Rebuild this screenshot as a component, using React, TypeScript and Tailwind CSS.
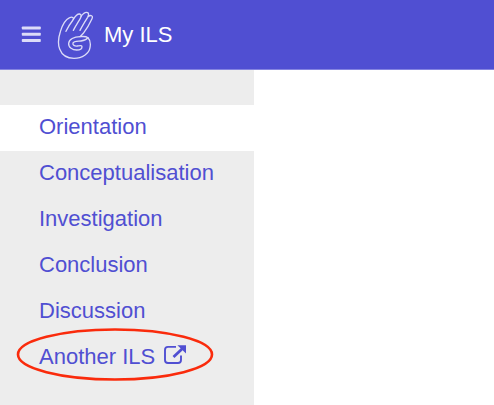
interface PhaseItem {
    label: string,
    active?: boolean,
    external?: boolean,
}

const phases: PhaseItem[] = [
    { label: "Orientation", active: true },
    { label: "Conceptualisation" },
    { label: "Investigation" },
    { label: "Conclusion" },
    { label: "Discussion" },
    { label: "Another ILS", external: true },
];

function MenuIcon() {
    return (
        <svg className="w-[20px] h-[18px]" viewBox="0 0 20 18" fill="#dcdcf8" aria-hidden="true">
            <rect x="0.8" y="0.5" width="19" height="3" rx="0.8" />
            <rect x="0.8" y="6.8" width="19" height="3" rx="0.8" />
            <rect x="0.8" y="13" width="19" height="3" rx="0.8" />
        </svg>
    );
}

function HandLogo() {
    return (
        <svg
            className="w-[38px] h-[50px]"
            viewBox="171 27 114 150"
            fill="none"
            stroke="#dcdcf8"
            strokeWidth="4"
            strokeLinecap="round"
            strokeLinejoin="round"
            aria-hidden="true"
        >
            <path d="M198 91 C204 77 212 66 219 57 C223 50 217 46 209 50 C196 56 187 72 181 92 C175 110 173 128 179 144 C185 160 200 172 222 172 C247 172 267 158 270 140 C272 129 271 117 264 110 C259 106 250 106 240 107 L250 97 C260 84 270 66 276 53 C280 44 272 41 265 46" />
            <path d="M220 55 C226 45 233 38 239 39 C246 41 244 47 241 52 C234 64 226 76 220 88" />
            <path d="M243 46 C249 38 257 32 263 35 C268 38 266 43 263 49 C254 63 246 76 240 88" />
            <path d="M240 107 C222 107 207 115 206 127 C205 140 218 147 230 147 C239 147 246 143 246 137 C246 132 239 134 232 135 C224 136 217 132 219 126 C221 120 232 121 243 120 C253 119 260 115 264 110" />
        </svg>
    );
}

function ExternalIcon() {
    return (
        <svg className="w-[24px] h-[22px]" viewBox="0 2 24 22" fill="none" aria-hidden="true">
            <path
                d="M13 3.9H5A3 3 0 0 0 2 6.9V17A3 3 0 0 0 5 20H15A3 3 0 0 0 18 17V12.5"
                stroke="#504fd2"
                strokeWidth="1.9"
            />
            <path d="M10.5 14L20 5" stroke="#504fd2" strokeWidth="2.8" />
            <path d="M14.4 2.2H23V10.6L14.4 2.2Z" fill="#504fd2" />
        </svg>
    );
}

function Highlight() {
    return (
        <svg
            className="absolute left-[16px] -top-[8px] w-[198px] h-[54px] pointer-events-none"
            viewBox="0 0 198 54"
            fill="none"
            aria-hidden="true"
        >
            <ellipse cx="99" cy="27.5" rx="97" ry="25" stroke="#fa2b0c" strokeWidth="2.6" />
        </svg>
    );
}

export default function App() {
    return (
        <div className="min-h-screen flex flex-col bg-white font-['Liberation_Sans',Arial,sans-serif] text-[22px]">
            <header className="h-[70px] flex items-center bg-[#504fd2] border-b border-[#8584e0] pl-[21px] text-white">
                <button type="button" aria-label="Toggle menu" className="cursor-pointer">
                    <MenuIcon />
                </button>
                <div className="flex items-center gap-[9px] ml-[16px]">
                    <HandLogo />
                    <h1>My ILS</h1>
                </div>
            </header>
            <div className="flex flex-1">
                <nav className="w-[254px] shrink-0 bg-[#ededed] pt-[35px]">
                    <ul>
                        {phases.map(({ label, active, external }) => (
                            <li key={label} className="relative">
                                <a
                                    href="#"
                                    aria-current={active ? "page" : undefined}
                                    className={`flex items-center gap-[8px] h-[46px] pl-[39px] pb-[4px] text-[#504fd2] ${active ? "bg-white" : ""}`}
                                >
                                    {label}
                                    {external && <ExternalIcon />}
                                </a>
                                {external && <Highlight />}
                            </li>
                        ))}
                    </ul>
                </nav>
                <main className="flex-1"></main>
            </div>
        </div>
    );
}
